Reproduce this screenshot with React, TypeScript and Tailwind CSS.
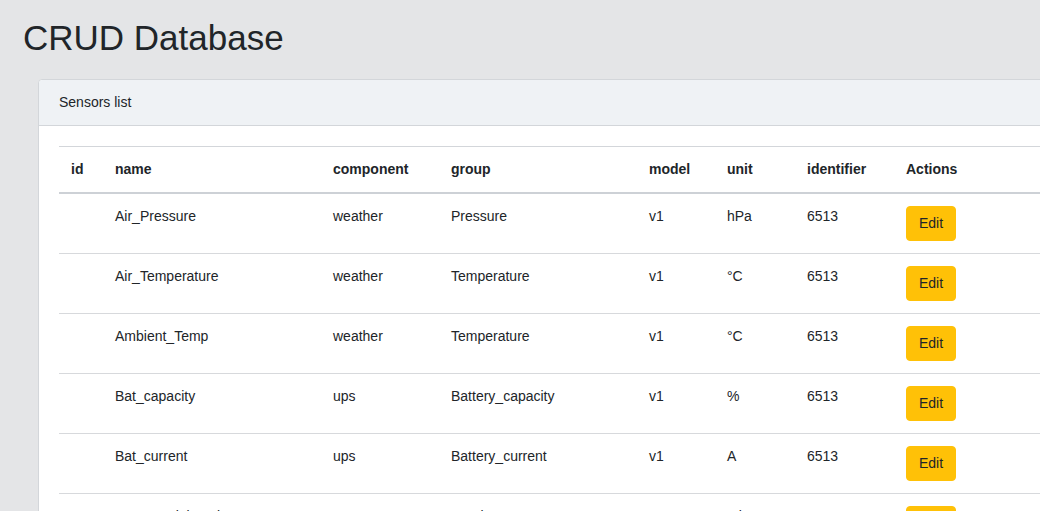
import React from "react";

const rows = [
  ["Air_Pressure", "weather", "Pressure", "v1", "hPa", "6513"],
  ["Air_Temperature", "weather", "Temperature", "v1", "°C", "6513"],
  ["Ambient_Temp", "weather", "Temperature", "v1", "°C", "6513"],
  ["Bat_capacity", "ups", "Battery_capacity", "v1", "%", "6513"],
  ["Bat_current", "ups", "Battery_current", "v1", "A", "6513"],
  ["Bat_remaining_time", "ups", "Runtime", "v1", "min", "6513"],
  ["Bat_voltage", "ups", "Battery_voltage", "v1", "V", "6513"],
];

const headers = ["id", "name", "component", "group", "model", "unit", "identifier", "Actions"];

export default function App() {
  return (
    <div
      className="h-screen w-screen overflow-hidden bg-[#e4e5e7] text-[#212529]"
      style={{ fontFamily: '"Liberation Sans", Arial, sans-serif' }}
    >
      <h1 className="ml-[23px] pt-[17px] text-[35px] leading-[42px] font-normal">CRUD Database</h1>
      <div className="ml-[38px] mt-[20px] w-[1100px] rounded-[4px] border border-[#d3d6da] bg-white">
        <div className="rounded-t-[4px] border-b border-[#d3d6da] bg-[#eff2f5] px-5 py-3 text-[14px] leading-[21px]">
          Sensors list
        </div>
        <div className="p-5">
          <table className="w-full table-fixed border-collapse text-[14px] leading-[21px]">
            <colgroup>
              <col className="w-[44px]" />
              <col className="w-[218px]" />
              <col className="w-[118px]" />
              <col className="w-[198px]" />
              <col className="w-[78px]" />
              <col className="w-[80px]" />
              <col className="w-[99px]" />
              <col />
            </colgroup>
            <thead>
              <tr>
                {headers.map((h) => (
                  <th
                    key={h}
                    className="border-t border-b-2 border-t-[#d3d6da] border-b-[#cdd1d6] p-3 text-left align-bottom font-bold"
                  >
                    {h}
                  </th>
                ))}
              </tr>
            </thead>
            <tbody>
              {rows.map((r, i) => (
                <tr key={i}>
                  <td className="border-t border-[#d7d9dc] p-3 align-top"></td>
                  {r.map((c, j) => (
                    <td key={j} className="border-t border-[#d7d9dc] p-3 align-top">
                      {c}
                    </td>
                  ))}
                  <td className="border-t border-[#d7d9dc] p-3 align-top">
                    <button className="rounded-[4px] border border-[#ffc107] bg-[#ffc107] px-3 py-[6px] text-[14px] leading-[21px] text-[#212529]">
                      Edit
                    </button>
                  </td>
                </tr>
              ))}
            </tbody>
          </table>
        </div>
      </div>
    </div>
  );
}
